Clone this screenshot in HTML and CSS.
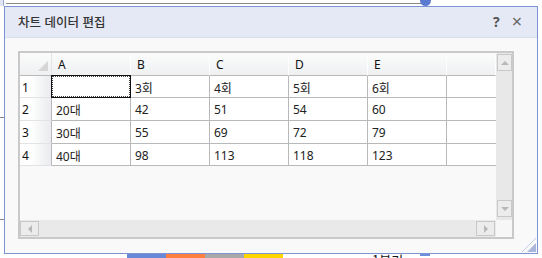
FILE: index.html
```html
<!DOCTYPE html>
<html lang="ko">
<head>
    <meta charset="UTF-8">
    <title>차트 데이터 편집</title>
    <link rel="stylesheet" href="styles.css">
</head>
<body>
    <!-- chart behind the dialog -->
    <div class="backdrop">
        <div class="handle-box"></div>
        <div class="top-line"></div>
        <div class="handle-dot"></div>
        <div class="stub stub-a"></div>
        <div class="stub stub-b"></div>
        <div class="legend">
            <span class="swatch blue"></span><span class="swatch orange"></span><span class="swatch gray"></span><span class="swatch yellow"></span>
        </div>
        <div class="axis-label">1분기</div>
        <div class="handle-bottom"></div>
    </div>

    <div class="dialog">
        <div class="titlebar">
            <span class="title">차트 데이터 편집</span>
            <span class="tools"><span class="help">?</span><span class="close">×</span></span>
        </div>
        <div class="dialog-body">
            <div class="sheet">
                <div class="sheet-main">
                    <div class="cells" id="cells"></div>
                    <div class="vscroll">
                        <div class="sbtn"><span class="arrow up"></span></div>
                        <div class="sbtn"><span class="arrow down"></span></div>
                    </div>
                </div>
                <div class="sheet-foot">
                    <div class="hscroll">
                        <div class="sbtn"><span class="arrow left"></span></div>
                        <div class="sbtn"><span class="arrow right"></span></div>
                    </div>
                    <div class="corner"></div>
                </div>
            </div>
        </div>
        <svg class="grip" width="16" height="16" viewBox="0 0 16 16">
            <line x1="1" y1="15" x2="15" y2="1" stroke="#c3cde8" stroke-width="1"/>
            <polygon points="15,6 15,15 6,15" fill="#a9b6da"/>
        </svg>
    </div>

    <script>
        const data = [
            ['', '3회', '4회', '5회', '6회'],
            ['20대', '42', '51', '54', '60'],
            ['30대', '55', '69', '72', '79'],
            ['40대', '98', '113', '118', '123']
        ];
        const cols = ['A', 'B', 'C', 'D', 'E', ''];
        const cells = document.getElementById('cells');

        let html = '<div class="hd corner-cell"><span class="tri"></span></div>';
        cols.forEach(c => { html += `<div class="hd">${c}</div>`; });
        data.forEach((row, r) => {
            html += `<div class="rh">${r + 1}</div>`;
            row.forEach((v, c) => {
                const sel = (r === 0 && c === 0) ? ' sel' : '';
                html += `<div class="cell${sel}">${v}</div>`;
            });
            html += '<div class="cell last"></div>';
        });
        cells.innerHTML = html;
    </script>
</body>
</html>
```

FILE: styles.css
```css
body {
    margin: 0;
    width: 542px;
    height: 258px;
    background: #fff;
    position: relative;
    overflow: hidden;
    font-family: 'Noto Sans', 'Noto Sans CJK KR', sans-serif;
    color: #222;
}

/* chart pieces peeking out behind the dialog */
.backdrop {
    position: absolute;
    inset: 0;
}

.handle-box {
    position: absolute;
    left: 0;
    top: 0;
    width: 3px;
    height: 6px;
    background: #dfe5f5;
    border-right: 1px solid #9aaadb;
}

.top-line {
    position: absolute;
    left: 6px;
    top: 3px;
    width: 416px;
    height: 1px;
    background: #8a8a8a;
}

.handle-dot {
    position: absolute;
    left: 420px;
    top: -5px;
    width: 11px;
    height: 11px;
    border-radius: 50%;
    background: #5b7bd0;
}

.stub {
    position: absolute;
    left: 0;
    width: 4px;
    height: 1px;
    background: #888;
}

.stub-a { top: 117px; }
.stub-b { top: 219px; }

.legend {
    position: absolute;
    left: 127px;
    top: 254px;
    display: flex;
}

.swatch {
    width: 39px;
    height: 4px;
}

.blue { background: #6a88d8; }
.orange { background: #ff7f40; }
.gray { background: #a9a9a9; }
.yellow { background: #ffd500; }

.axis-label {
    position: absolute;
    left: 372px;
    top: 252px;
    font-family: 'Noto Sans CJK KR', sans-serif;
    font-size: 13px;
    line-height: 16px;
    color: #111;
}

.handle-bottom {
    position: absolute;
    left: 420px;
    top: 253px;
    width: 10px;
    height: 3px;
    background: #6f8fdd;
}

/* dialog */
.dialog {
    position: absolute;
    left: 4px;
    top: 6px;
    width: 534px;
    height: 248px;
    box-sizing: border-box;
    border: 1px solid #7d94d4;
    background: #f9f9f9;
    display: flex;
    flex-direction: column;
}

.titlebar {
    height: 31px;
    flex: none;
    box-sizing: border-box;
    background: #e5e9f5;
    border-bottom: 1px solid #d9deee;
    display: flex;
    align-items: center;
    justify-content: space-between;
    padding: 0 15px 0 13px;
}

.title {
    font-family: 'Noto Sans CJK KR', sans-serif;
    font-size: 12.5px;
    font-weight: 500;
    color: #333;
    margin-top: -2px;
}

.tools {
    display: flex;
    align-items: center;
    gap: 12px;
    color: #555;
    margin-top: -2px;
}

.help {
    font-size: 14px;
    font-weight: bold;
}

.close {
    font-size: 18px;
    color: #666;
}

.dialog-body {
    padding: 13px 0 0 13px;
}

.sheet {
    width: 496px;
    height: 188px;
    box-sizing: border-box;
    border: 2px solid #c9c9c9;
    display: flex;
    flex-direction: column;
}

.sheet-main {
    height: 167px;
    display: flex;
}

.cells {
    width: 476px;
    display: grid;
    grid-template-columns: 32px repeat(5, 79px) 1fr;
    grid-template-rows: 23px 22px 23px 23px 22px;
    align-content: start;
    font-size: 12px;
}

.hd {
    box-sizing: border-box;
    background: linear-gradient(#fbfbfb, #eff0f2);
    border-right: 1px solid #fdfdfd;
    border-bottom: 1px solid #b9b9b9;
    color: #111;
    padding: 3px 0 0 6px;
}

.corner-cell {
    position: relative;
    border-right: 1px solid #e4e4e4;
}

.tri {
    position: absolute;
    right: 3px;
    bottom: 4px;
    width: 0;
    height: 0;
    border-left: 10px solid transparent;
    border-bottom: 10px solid #d6d6d6;
}

.rh {
    box-sizing: border-box;
    background: linear-gradient(to right, #fff 35%, #e9ebee);
    border-right: 1px solid #b9b9b9;
    border-bottom: 1px solid #e3e3e3;
    color: #111;
    padding: 3px 0 0 2px;
}

.cell {
    box-sizing: border-box;
    background: #fff;
    border-right: 1px solid #b9b9b9;
    border-bottom: 1px solid #b9b9b9;
    padding: 3px 0 0 4px;
    color: #222;
}

.cell.last {
    border-right: none;
}

.cell.sel {
    position: relative;
}

.cell.sel::after {
    content: '';
    position: absolute;
    left: -1px;
    top: -1px;
    right: -1px;
    bottom: -1px;
    border: 1px solid #111;
    outline: 1px dotted #444;
    outline-offset: -2px;
}

.vscroll {
    width: 16px;
    background: #e8e8e8;
    display: flex;
    flex-direction: column;
    justify-content: space-between;
    padding: 1px 0 3px 1px;
    box-sizing: border-box;
}

.sbtn {
    width: 15px;
    height: 17px;
    box-sizing: border-box;
    border: 1px solid #c8c8c8;
    background: #ececec;
    display: flex;
    align-items: center;
    justify-content: center;
}

.arrow {
    width: 0;
    height: 0;
}

.arrow.up {
    border-left: 4px solid transparent;
    border-right: 4px solid transparent;
    border-bottom: 4px solid #b8b8b8;
}

.arrow.down {
    border-left: 4px solid transparent;
    border-right: 4px solid transparent;
    border-top: 4px solid #b8b8b8;
}

.arrow.left {
    border-top: 4px solid transparent;
    border-bottom: 4px solid transparent;
    border-right: 4px solid #b8b8b8;
}

.arrow.right {
    border-top: 4px solid transparent;
    border-bottom: 4px solid transparent;
    border-left: 4px solid #b8b8b8;
}

.sheet-foot {
    height: 17px;
    display: flex;
}

.hscroll {
    width: 476px;
    background: #e9e9e9;
    display: flex;
    justify-content: space-between;
    padding: 1px 1px 1px 0;
    box-sizing: border-box;
}

.hscroll .sbtn {
    width: 19px;
    height: 15px;
}

.corner {
    flex: 1;
    background: #f7f7f7;
}

.grip {
    position: absolute;
    right: 0;
    bottom: 0;
}
```
